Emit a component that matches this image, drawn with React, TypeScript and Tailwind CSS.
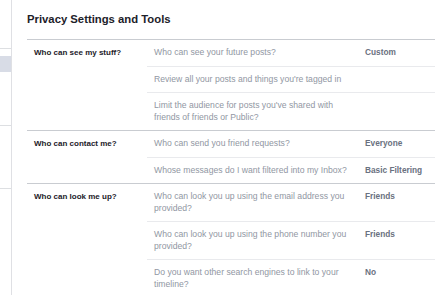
import React from 'react';

interface Row {
  question: string;
  value?: string;
}

interface Section {
  label: string;
  rows: Row[];
}

const sections: Section[] = [
  {
    label: 'Who can see my stuff?',
    rows: [
      { question: 'Who can see your future posts?', value: 'Custom' },
      { question: "Review all your posts and things you're tagged in" },
      { question: "Limit the audience for posts you've shared with friends of friends or Public?" },
    ],
  },
  {
    label: 'Who can contact me?',
    rows: [
      { question: 'Who can send you friend requests?', value: 'Everyone' },
      { question: 'Whose messages do I want filtered into my Inbox?', value: 'Basic Filtering' },
    ],
  },
  {
    label: 'Who can look me up?',
    rows: [
      { question: 'Who can look you up using the email address you provided?', value: 'Friends' },
      { question: 'Who can look you up using the phone number you provided?', value: 'Friends' },
      { question: 'Do you want other search engines to link to your timeline?', value: 'No' },
    ],
  },
];

function Sidebar() {
  return (
    <div className="w-[12px] shrink-0 border-r border-[#dfe0e4] bg-white flex flex-col">
      <div className="h-[49px] border-b border-[#dddfe2]" />
      <div className="h-[77px] border-b border-[#dddfe2] pt-[7px]">
        <div className="h-[16px] bg-[#d8dce6]" />
      </div>
      <div className="h-[63px] border-b border-[#dddfe2]" />
    </div>
  );
}

function SettingsSection({ section }: { section: Section }) {
  return (
    <div className="flex border-b border-[#c9ccd1]">
      <div className="w-[120px] shrink-0 pl-[7px] pt-[7px] text-[8px] leading-[11.5px] font-bold text-[#1d2129]">
        {section.label}
      </div>
      <div className="flex-1">
        {section.rows.map((row, i) => (
          <div
            key={i}
            className={`flex py-[7px] ${i < section.rows.length - 1 ? 'border-b border-[#e9eaed]' : ''}`}
          >
            <div className="w-[211px] shrink-0 pl-[7px] pr-[3px] text-[8.65px] leading-[11.5px] text-[#9197a3]">
              {row.question}
            </div>
            {row.value && (
              <div className="pl-[7px] text-[8.3px] leading-[11.5px] font-bold text-[#6a7180]">
                {row.value}
              </div>
            )}
          </div>
        ))}
      </div>
    </div>
  );
}

export default function App() {
  return (
    <div className="flex w-[435px] h-[295px] overflow-hidden bg-white font-['Liberation_Sans',Arial,sans-serif]">
      <Sidebar />
      <div className="flex-1 pl-[15px]">
        <div className="h-[40px] pt-[12px] border-b border-[#c9ccd1]">
          <h1 className="text-[11.3px] leading-[14px] font-bold text-[#1d2129]">
            Privacy Settings and Tools
          </h1>
        </div>
        {sections.map((s) => (
          <SettingsSection key={s.label} section={s} />
        ))}
      </div>
    </div>
  );
}
